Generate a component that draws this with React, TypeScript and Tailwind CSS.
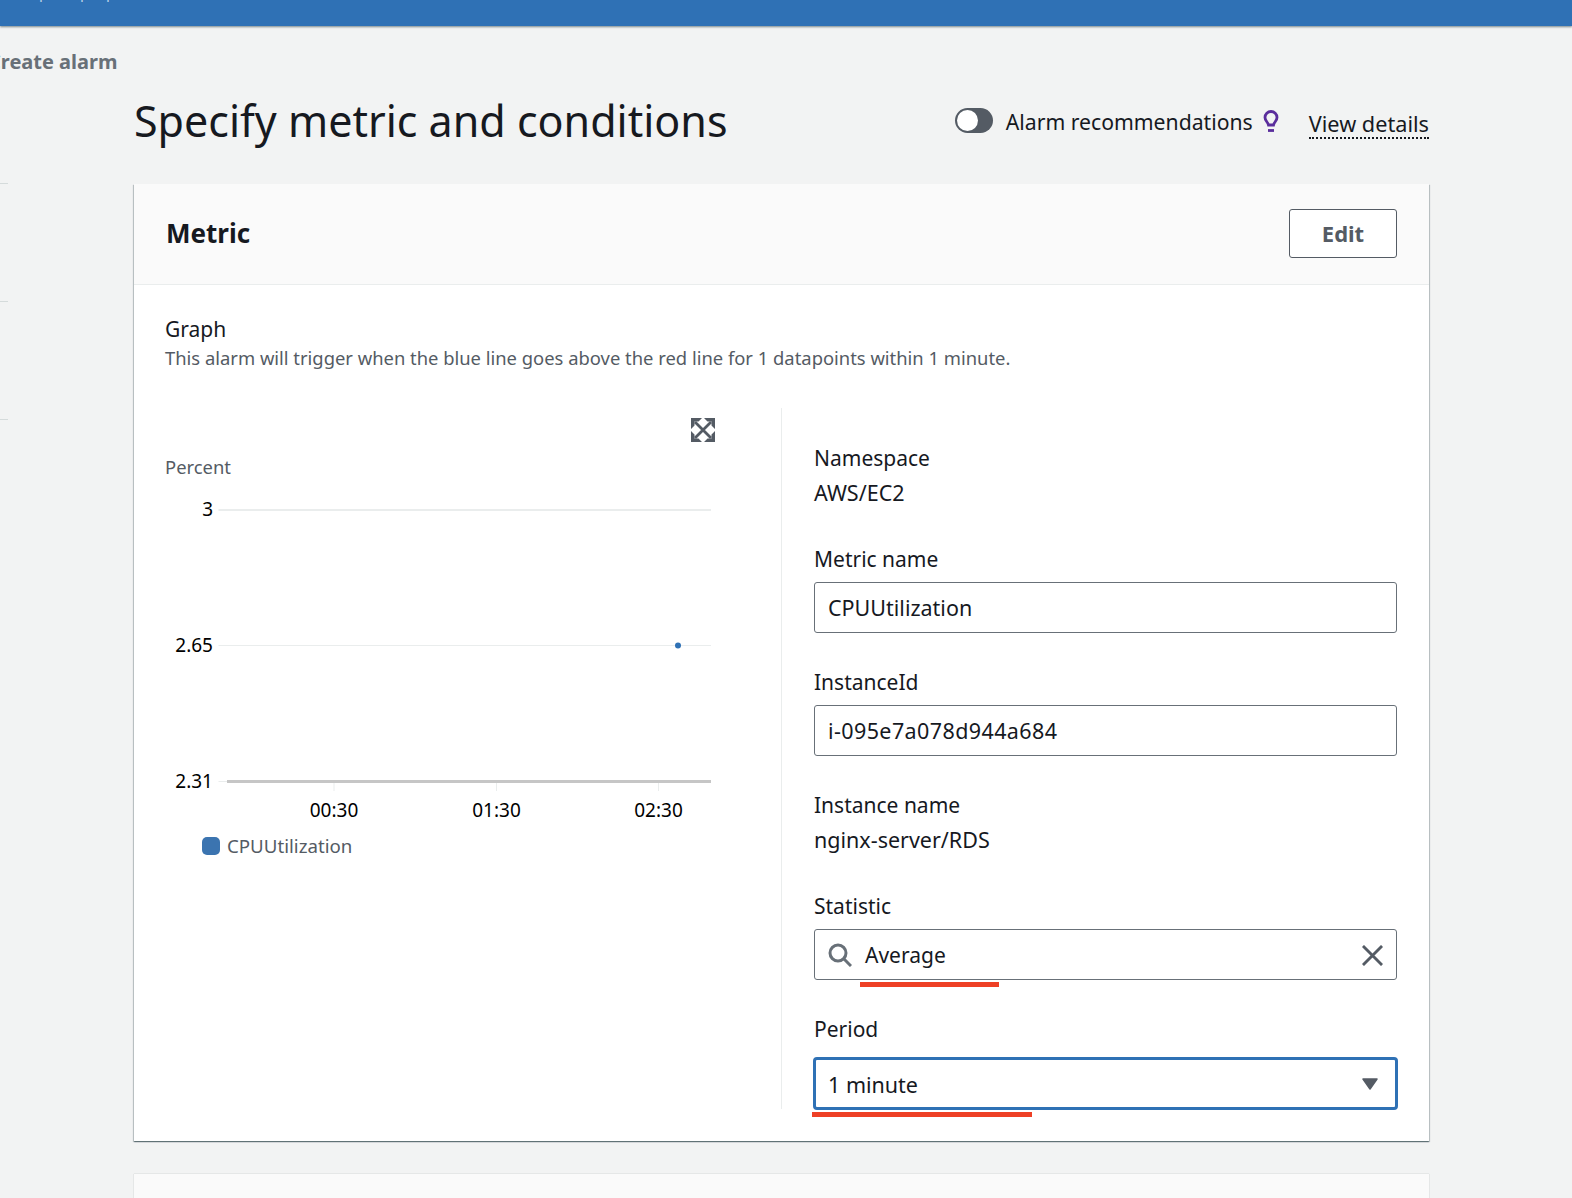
const font = "font-['Noto_Sans',sans-serif]";

function Label({ children }: { children: string }) {
  return <div className="text-[21px] leading-[30px] text-[#16191f]">{children}</div>;
}

function Box({ children }: { children: React.ReactNode }) {
  return (
    <div className="mt-[8px] flex h-[51px] items-center rounded-[3px] border border-[#687078] bg-white px-[13px] pt-[2px] text-[21.500px] text-[#16191f]">
      {children}
    </div>
  );
}

function Chart() {
  return (
    <svg viewBox="0 0 600 480" className="mt-[-79px] h-[480px] w-[600px]" fontFamily="'Noto Sans', sans-serif">
      <path d="M68.500 109H561" stroke="#eaeded" strokeWidth="2" fill="none" />
      <path d="M68.500 244.500H561" stroke="#eaeded" fill="none" />
      <path d="M68.500 380.500H77" stroke="#eaeded" fill="none" />
      <path d="M77 380.500H561" stroke="#c6c6c6" strokeWidth="3" fill="none" />
      <path d="M184 382V390M346.500 382V390M508.500 382V390" stroke="#eaeded" fill="none" />
      <circle cx="528" cy="244.500" r="3" fill="#2f71b5" />
      <g fontSize="19" fill="#000" textAnchor="end">
        <text x="63" y="115">3</text>
        <text x="63" y="251">2.65</text>
        <text x="63" y="387">2.31</text>
      </g>
      <g fontSize="19" fill="#000" textAnchor="middle">
        <text x="184" y="416">00:30</text>
        <text x="346.500" y="416">01:30</text>
        <text x="508.500" y="416">02:30</text>
      </g>
    </svg>
  );
}

export default function App() {
  return (
    <div className={`${font} h-[1198px] overflow-hidden bg-[#f2f3f3]`}>
      <div className="h-[26px] overflow-hidden bg-[#2f71b5] shadow-[0_1px_2px_rgba(0,28,36,0.5)]">
        <div className="mt-[-18px] flex pl-[39px] text-[15px] leading-[20px] text-[#b9d3ea]">
          <span className="w-[41px]">p</span>
          <span className="w-[26px]">p</span>
          <span>p</span>
        </div>
      </div>

      <div className="mt-[21px] mb-[1px] ml-[-12px] text-[20px] leading-[30px] font-bold text-[#687078]">Create alarm</div>

      <div className="flex">
        <div className="w-[134px] shrink-0">
          <div className="mt-[105px] w-2 border-t border-[#d5dbdb]" />
          <div className="mt-[117px] w-2 border-t border-[#d5dbdb]" />
          <div className="mt-[117px] w-2 border-t border-[#d5dbdb]" />
        </div>

        <div className="w-[1295px]">
          <div className="flex h-[106px] items-center pb-[16px]">
            <h1 className="mt-[-4px] text-[43px] leading-[56px] font-normal text-[#16191f]">Specify metric and conditions</h1>
            <div className="ml-auto flex items-center">
              <div className="mb-[4px] flex h-[25px] w-[38px] items-center rounded-full bg-[#545b64] pl-[2px]">
                <div className="h-[21px] w-[21px] rounded-full bg-white" />
              </div>
              <span className="mb-[2px] ml-[13px] text-[21.200px] text-[#16191f]">Alarm recommendations</span>
              <svg viewBox="0 0 16 24" className="mb-[2px] ml-[10px] h-[24px] w-[16px]" fill="none" stroke="#5a2d9c" strokeWidth="2.800">
                <path d="M5.500 15C5 12 2 11 2 7.500a6 6 0 0 1 12 0C14 11 11 12 10.500 15Z" />
                <path d="M5 20.500H11" />
              </svg>
              <span className="mt-[3px] ml-[30px] border-b-2 border-dotted border-[#16191f] text-[21.700px] leading-[27px] text-[#16191f]">View details</span>
            </div>
          </div>

          <div className="bg-white shadow-[0_1px_1px_0_rgba(0,28,36,0.4),1px_1px_1px_0_rgba(0,28,36,0.18),-1px_1px_1px_0_rgba(0,28,36,0.18)]">
            <div className="flex h-[101px] items-center justify-between border-b border-[#eaeded] bg-[#fafafa] pr-8 pb-[2px] pl-8">
              <h2 className="text-[26px] font-bold text-[#16191f]">Metric</h2>
              <button className="h-[49px] w-[108px] rounded-[3px] border border-[#545b64] bg-white pt-[1px] text-[22px] font-bold text-[#545b64]">Edit</button>
            </div>

            <div className="h-[856px] pt-[29px] pr-8 pl-[31px]">
              <div className="text-[21px] leading-[30px] text-[#16191f]">Graph</div>
              <div className="text-[18.400px] leading-[28px] text-[#545b64]">This alarm will trigger when the blue line goes above the red line for 1 datapoints within 1 minute.</div>

              <div className="mt-[36px] flex">
                <div className="h-[701px] w-[617px] border-r border-[#eaeded]">
                  <div className="flex justify-end pt-[10px] pr-[66px] pb-[12px]">
                    <svg viewBox="0 0 24 24" className="h-[24px] w-[24px]" fill="#545b64">
                      <path d="M0 0H11L7.500 3.500H3.500V7.500L0 11Z" />
                      <path d="M24 0V11L20.500 7.500V3.500H16.500L13 0Z" />
                      <path d="M24 24H13L16.500 20.500H20.500V16.500L24 13Z" />
                      <path d="M0 24V13L3.500 16.500V20.500H7.500L11 24Z" />
                      <path d="M4 4L20 20M20 4L4 20" stroke="#545b64" strokeWidth="2.800" fill="none" />
                    </svg>
                  </div>
                  <div className="text-[18.400px] leading-[26px] text-[#545b64]">Percent</div>
                  <div className="ml-[-15px]">
                    <Chart />
                  </div>
                  <div className="mt-[-49px] ml-[37px] flex items-center text-[18.700px] text-[#545b64]">
                    <span className="mr-[7px] h-[18px] w-[18px] rounded-[5px] bg-[#3b74b0]" />
                    CPUUtilization
                  </div>
                </div>

                <div className="flex-1 pl-8">
                  <div className="pt-[35px]">
                    <Label>Namespace</Label>
                    <div className="mt-[5px] text-[21.500px] leading-[30px] text-[#16191f]">AWS/EC2</div>
                  </div>
                  <div className="mt-[36px]">
                    <Label>Metric name</Label>
                    <Box>CPUUtilization</Box>
                  </div>
                  <div className="mt-[34px]">
                    <Label>InstanceId</Label>
                    <Box><span className="tracking-[0.4px]">i-095e7a078d944a684</span></Box>
                  </div>
                  <div className="mt-[34px]">
                    <Label>Instance name</Label>
                    <div className="mt-[5px] text-[21.500px] leading-[30px] text-[#16191f]">nginx-server/RDS</div>
                  </div>
                  <div className="mt-[36px]">
                    <Label>Statistic</Label>
                    <div className="relative">
                      <Box>
                        <svg viewBox="0 0 24 24" className="mt-[-2px] h-[24px] w-[24px]" fill="none" stroke="#687078" strokeWidth="3">
                          <circle cx="10" cy="10" r="8" />
                          <path d="M16 16L23 23" />
                        </svg>
                        <span className="ml-[13px] text-[21px]">Average</span>
                        <svg viewBox="0 0 22 22" className="ml-auto h-[21px] w-[21px]" fill="none" stroke="#545b64" strokeWidth="3">
                          <path d="M1 1L21 21M21 1L1 21" />
                        </svg>
                      </Box>
                      <div className="absolute top-[53px] left-[46px] h-[5px] w-[139px] bg-[#ee4025]" />
                    </div>
                  </div>
                  <div className="mt-[34px]">
                    <Label>Period</Label>
                    <div className="relative">
                      <div className="mx-[-1px] mt-[13px] flex h-[53px] items-center justify-between rounded-[4px] border-[3px] border-[#2f71b5] bg-white pt-[3px] pr-[17px] pl-[12px] text-[21.500px] text-[#16191f]">
                        1 minute
                        <svg viewBox="0 0 16 12" className="mt-[-3px] h-[12px] w-[16px]"><path d="M1 1H15L8 11Z" fill="#545b64" stroke="#545b64" strokeWidth="1.500" strokeLinejoin="round" /></svg>
                      </div>
                      <div className="absolute top-[55px] left-[-2px] h-[5px] w-[220px] bg-[#ee4025]" />
                    </div>
                  </div>
                </div>
              </div>
            </div>
          </div>

          <div className="mt-[33px] h-[60px] bg-[#fafafa] shadow-[0_0_1px_0_rgba(0,28,36,0.3)]" />
        </div>
      </div>
    </div>
  );
}
